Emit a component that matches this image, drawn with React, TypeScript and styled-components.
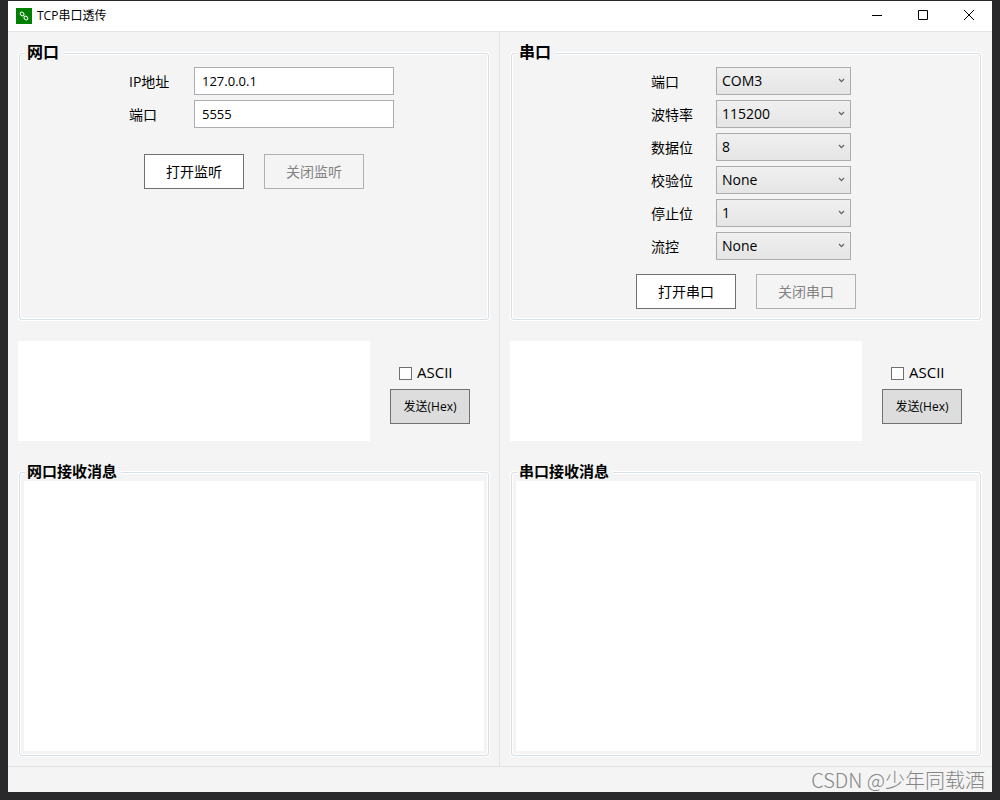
import React from "react";
import styled, { createGlobalStyle } from "styled-components";

const GlobalStyle = createGlobalStyle`
  *, *::before, *::after { box-sizing: border-box; }
  body {
    margin: 0;
    background: #29292b;
    color: #000;
    font-family: "Open Sans", "Noto Sans CJK SC", sans-serif;
    font-size: 14px;
  }
  button, input, select, textarea { font: inherit; color: inherit; border-radius: 0; }
`;

const Desktop = styled.div`
  display: flex;
  min-height: 100vh;
  padding: 1px 8px 8px;
`;

const Window = styled.div`
  flex: 1;
  display: flex;
  flex-direction: column;
  min-width: 0;
  background: #f4f4f4;
`;

const TitleBar = styled.header`
  display: flex;
  align-items: center;
  height: 31px;
  padding-left: 8px;
  background: #fff;
  border-bottom: 1px solid #e3e3e3;
`;

const AppIcon = styled.svg`
  width: 16px;
  height: 16px;
  margin-right: 5px;
`;

const Title = styled.h1`
  flex: 1;
  margin: 0;
  font-size: 12px;
  font-weight: 400;
  line-height: 16px;
`;

const CaptionButton = styled.button`
  display: flex;
  align-items: center;
  justify-content: center;
  width: 46px;
  height: 30px;
  padding: 0 0 2px;
  border: 0;
  background: transparent;
`;

const Panels = styled.main`
  flex: 1;
  display: grid;
  grid-template-columns: 1fr 1fr;
`;

const Panel = styled.section`
  display: flex;
  flex-direction: column;
  min-width: 0;
  padding: 10px;

  &:first-child {
    padding-right: 9px;
    border-right: 1px solid #e3e3e3;
  }
`;

const GroupBox = styled.fieldset`
  min-width: 0;
  margin: 0 1px;
  padding: 2px 4px 4px;
  border: 1px solid #d5dfe5;
  border-radius: 3px;
  box-shadow: 0 0 0 1px #fff, inset 0 0 0 1px #fff;
`;

const SettingsGroup = styled(GroupBox)`
  min-height: 278px;
`;

const MessageGroup = styled(GroupBox)`
  flex: 1;
  display: flex;
  padding-top: 0;
`;

const Legend = styled.legend<{ $large?: boolean }>`
  margin-left: 1px;
  padding: 0 4px 2px 2px;
  background: #f4f4f4;
  font-size: ${(p) => (p.$large ? 16 : 15)}px;
  font-weight: 700;
  line-height: ${(p) => (p.$large ? 21 : 15)}px;
`;

const Form = styled.div<{ $field: number; $indent: number }>`
  display: grid;
  grid-template-columns: 65px ${(p) => p.$field}px;
  grid-auto-rows: 28px;
  gap: 5px 0;
  align-items: center;
  justify-content: center;
  padding-left: ${(p) => p.$indent}px;
`;

const TextInput = styled.input`
  width: 100%;
  height: 28px;
  padding: 0 7px;
  border: 1px solid #abadb3;
  background: #fff;
  font-size: 13px;
`;

const SelectBox = styled.div`
  position: relative;
`;

const Select = styled.select`
  display: block;
  appearance: none;
  width: 100%;
  height: 28px;
  padding: 0 20px 2px 5px;
  border: 1px solid #acacac;
  background: linear-gradient(#f0f0f0, #e5e5e5);
  font-size: 14px;
`;

const Chevron = styled.svg`
  position: absolute;
  top: 11px;
  right: 6px;
  width: 7px;
  height: 5px;
  pointer-events: none;
`;

const Actions = styled.div<{ $top: number }>`
  display: flex;
  justify-content: center;
  gap: 20px;
  margin-top: ${(p) => p.$top}px;
`;

const ActionButton = styled.button`
  width: 100px;
  height: 35px;
  padding: 0 0 2px;
  border: 1px solid #707070;
  background: #fff;

  &:disabled {
    border-color: #adb2b5;
    background: #f4f4f4;
    color: #838383;
  }
`;

const SendRow = styled.div`
  display: flex;
  height: 100px;
  margin: 21px 0 23px;
`;

const MessageBox = styled.textarea`
  flex: 1;
  display: block;
  min-width: 0;
  margin: 0;
  padding: 4px;
  border: 0;
  background: #fff;
  resize: none;
`;

const SendControls = styled.div`
  display: flex;
  flex-direction: column;
  width: 120px;
  padding: 22px 20px 0;
`;

const CheckLabel = styled.label`
  display: flex;
  align-items: center;
  gap: 5px;
  height: 20px;
  margin: 0 0 6px 9px;
  font-size: 15px;
  line-height: 20px;
`;

const CheckText = styled.span`
  padding-bottom: 2px;
`;

const CheckBox = styled.input`
  appearance: none;
  width: 13px;
  height: 13px;
  margin: 0;
  border: 1px solid #707070;
  background: #fff;

  &:checked { background: #707070; box-shadow: inset 0 0 0 2px #fff; }
`;

const SendButton = styled.button`
  width: 80px;
  height: 35px;
  padding: 0 0 2px;
  border: 1px solid #707070;
  background: #ddd;
  font-size: 12px;
`;

const StatusBar = styled.footer`
  display: flex;
  align-items: center;
  justify-content: flex-end;
  height: 26px;
  padding-right: 7px;
  border-top: 1px solid #e0e0e0;
`;

const Credit = styled.span`
  color: #858585;
  font-family: "Noto Sans CJK SC", sans-serif;
  font-size: 20px;
  font-weight: 300;
  line-height: 24px;
  white-space: nowrap;
`;

type Field = { id: string; label: string; value: string };

const networkFields: Field[] = [
  { id: "ip", label: "IP地址", value: "127.0.0.1" },
  { id: "tcp-port", label: "端口", value: "5555" },
];

const serialFields: (Field & { options: string[] })[] = [
  { id: "com", label: "端口", value: "COM3", options: ["COM1", "COM2", "COM3"] },
  { id: "baud", label: "波特率", value: "115200", options: ["9600", "57600", "115200"] },
  { id: "data", label: "数据位", value: "8", options: ["7", "8"] },
  { id: "parity", label: "校验位", value: "None", options: ["None", "Odd", "Even"] },
  { id: "stop", label: "停止位", value: "1", options: ["1", "2"] },
  { id: "flow", label: "流控", value: "None", options: ["None", "RTS"] },
];

function Send({ name }: { name: string }) {
  return (
    <SendRow>
      <MessageBox aria-label={name} />
      <SendControls>
        <CheckLabel>
          <CheckBox type="checkbox" />
          <CheckText>ASCII</CheckText>
        </CheckLabel>
        <SendButton type="button">发送(Hex)</SendButton>
      </SendControls>
    </SendRow>
  );
}

function Received({ title }: { title: string }) {
  return (
    <MessageGroup>
      <Legend>{title}</Legend>
      <MessageBox readOnly aria-label={title} />
    </MessageGroup>
  );
}

export default function App() {
  return (
    <>
      <GlobalStyle />
      <Desktop>
        <Window>
          <TitleBar>
            <AppIcon viewBox="0 0 16 16" aria-hidden="true">
              <rect width="16" height="16" fill="#008000" />
              <g fill="none" stroke="#fff" strokeWidth="1">
                <rect x="-2.4" y="-1.6" width="4.2" height="3.2" rx="1.6" transform="translate(6.3 6.2) rotate(45)" />
                <rect x="-1.8" y="-1.6" width="4.2" height="3.2" rx="1.6" transform="translate(9.7 9.8) rotate(45)" />
                <path d="M7 7l2 2" />
              </g>
            </AppIcon>
            <Title>TCP串口透传</Title>
            <CaptionButton type="button" aria-label="最小化">
              <svg width="10" height="10" viewBox="0 0 10 10">
                <path d="M0 5.5h10" stroke="#000" />
              </svg>
            </CaptionButton>
            <CaptionButton type="button" aria-label="最大化">
              <svg width="10" height="10" viewBox="0 0 10 10">
                <path d="M.5.5h9v9h-9z" fill="none" stroke="#000" />
              </svg>
            </CaptionButton>
            <CaptionButton type="button" aria-label="关闭">
              <svg width="10" height="10" viewBox="0 0 10 10">
                <path d="M0 0l10 10M10 0L0 10" stroke="#000" />
              </svg>
            </CaptionButton>
          </TitleBar>

          <Panels>
            <Panel>
              <SettingsGroup>
                <Legend $large>网口</Legend>
                <Form $field={200} $indent={15}>
                  {networkFields.map((f) => (
                    <React.Fragment key={f.id}>
                      <label htmlFor={f.id}>{f.label}</label>
                      <TextInput id={f.id} type="text" defaultValue={f.value} />
                    </React.Fragment>
                  ))}
                </Form>
                <Actions $top={26}>
                  <ActionButton type="button">打开监听</ActionButton>
                  <ActionButton type="button" disabled>关闭监听</ActionButton>
                </Actions>
              </SettingsGroup>
              <Send name="网口发送" />
              <Received title="网口接收消息" />
            </Panel>

            <Panel>
              <SettingsGroup>
                <Legend $large>串口</Legend>
                <Form $field={135} $indent={10}>
                  {serialFields.map((f) => (
                    <React.Fragment key={f.id}>
                      <label htmlFor={f.id}>{f.label}</label>
                      <SelectBox>
                        <Select id={f.id} defaultValue={f.value}>
                          {f.options.map((o) => (
                            <option key={o}>{o}</option>
                          ))}
                        </Select>
                        <Chevron viewBox="0 0 7 5" aria-hidden="true">
                          <path d="M1 1l2.5 2.6L6 1" fill="none" stroke="#606060" strokeWidth="1.2" />
                        </Chevron>
                      </SelectBox>
                    </React.Fragment>
                  ))}
                </Form>
                <Actions $top={14}>
                  <ActionButton type="button">打开串口</ActionButton>
                  <ActionButton type="button" disabled>关闭串口</ActionButton>
                </Actions>
              </SettingsGroup>
              <Send name="串口发送" />
              <Received title="串口接收消息" />
            </Panel>
          </Panels>

          <StatusBar>
            <Credit>CSDN @少年同载酒</Credit>
          </StatusBar>
        </Window>
      </Desktop>
    </>
  );
}
